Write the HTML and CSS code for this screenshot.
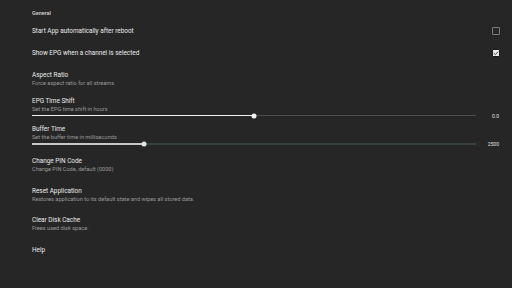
FILE: index.html
```html
<!DOCTYPE html>
<html>
<head>
<meta charset="utf-8">
<link rel="stylesheet" href="styles.css">
</head>
<body>
<div class="settings">
  <div class="category">General</div>

  <div class="pref">
    <div class="text"><div class="title">Start App automatically after reboot</div></div>
    <span class="checkbox"></span>
  </div>

  <div class="pref">
    <div class="text"><div class="title">Show EPG when a channel is selected</div></div>
    <span class="checkbox checked">
      <svg viewBox="0 0 8 8" width="8" height="8"><polyline points="1.8,4.2 3.3,5.6 6.2,2.6" fill="none" stroke="#3a3a3a" stroke-width="1"/></svg>
    </span>
  </div>

  <div class="pref pref-aspect">
    <div class="text">
      <div class="title">Aspect Ratio</div>
      <div class="summary">Force aspect ratio for all streams</div>
    </div>
  </div>

  <div class="pref pref-slider pref-epg">
    <div class="text">
      <div class="title">EPG Time Shift</div>
      <div class="summary">Set the EPG time shift in hours</div>
      <div class="slider">
        <div class="track">
          <div class="fill" style="width:50%"></div>
          <span class="thumb" style="left:50%"></span>
        </div>
        <span class="value">0.0</span>
      </div>
    </div>
  </div>

  <div class="pref pref-slider pref-buffer">
    <div class="text">
      <div class="title">Buffer Time</div>
      <div class="summary">Set the buffer time in milliseconds</div>
      <div class="slider slider-alt">
        <div class="track">
          <div class="fill" style="width:25.2%"></div>
          <span class="thumb" style="left:25.2%"></span>
        </div>
        <span class="value">2500</span>
      </div>
    </div>
  </div>

  <div class="pref pref-sub">
    <div class="text">
      <div class="title">Change PIN Code</div>
      <div class="summary">Change PIN Code, default (0000)</div>
    </div>
  </div>

  <div class="pref pref-sub">
    <div class="text">
      <div class="title">Reset Application</div>
      <div class="summary">Restores application to its default state and wipes all stored data.</div>
    </div>
  </div>

  <div class="pref pref-sub">
    <div class="text">
      <div class="title">Clear Disk Cache</div>
      <div class="summary">Frees used disk space.</div>
    </div>
  </div>

  <div class="pref">
    <div class="text"><div class="title">Help</div></div>
  </div>
</div>
</body>
</html>
```

FILE: styles.css
```css
html, body {
  margin: 0;
  padding: 0;
  background: #262626;
  width: 512px;
  height: 288px;
  overflow: hidden;
}

.settings {
  font-family: Roboto, "Noto Sans", sans-serif;
  padding: 9px 12px 0 32px;
  display: flex;
  flex-direction: column;
}

.category {
  height: 18px;
  font-size: 5.5px;
  line-height: 8px;
  font-weight: 500;
  color: #d6d6d6;
}

.pref {
  display: flex;
  align-items: flex-start;
  height: 22px;
}

.pref-aspect { height: 26px; }
.pref-epg { height: 28px; }
.pref-buffer { height: 32px; }
.pref-sub { height: 29.5px; }

.text {
  flex: 1;
  min-width: 0;
}

.title {
  font-size: 6.4px;
  line-height: 8px;
  color: #ebebeb;
  white-space: nowrap;
}

.summary {
  font-size: 5.6px;
  line-height: 9px;
  color: #9a9a9a;
  white-space: nowrap;
}

.checkbox {
  width: 8px;
  height: 8px;
  box-sizing: border-box;
  border: 1px solid #737d7d;
  border-radius: 1px;
  display: block;
}

.checkbox svg {
  display: block;
  margin: -1px;
}

.checkbox.checked {
  background: #ececec;
  border-color: #1a1a1a;
}

.slider {
  display: flex;
  align-items: center;
  height: 4px;
}

.pref-epg .slider {
  margin-top: -0.5px;
}

.track {
  flex: 1;
  position: relative;
  height: 1px;
  background: #4a4a4a;
}

.fill {
  height: 100%;
  background: #f0f0f0;
}

.thumb {
  position: absolute;
  top: 50%;
  width: 5px;
  height: 5px;
  border-radius: 50%;
  background: #f2f2f2;
  transform: translate(-50%, -50%);
}

.slider-alt .track {
  height: 1.5px;
  background: #36413d;
}

.slider-alt .fill {
  background: #c8c8c8;
}

.slider-alt .thumb {
  background: #e4e4e4;
}

.value {
  width: 23px;
  padding-right: 1px;
  text-align: right;
  font-size: 5px;
  line-height: 4px;
  color: #e0e0e0;
}
```
